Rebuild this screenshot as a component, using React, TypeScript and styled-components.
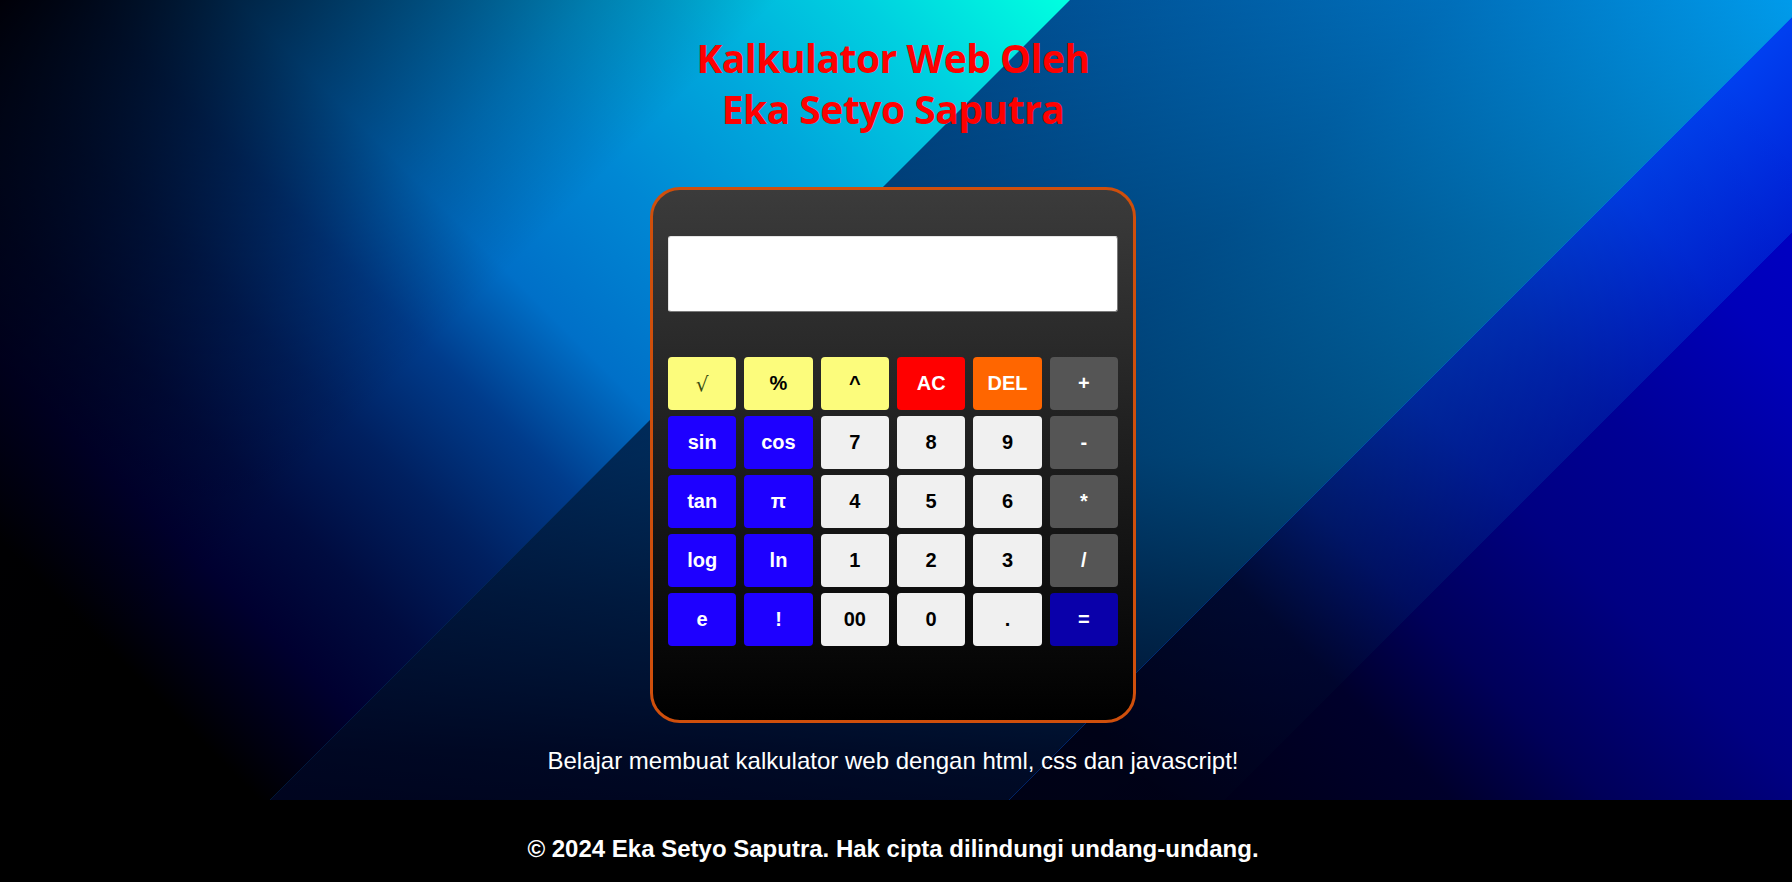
import React, { useState } from "react";
import styled, { createGlobalStyle } from "styled-components";

const GlobalStyle = createGlobalStyle`
  html, body {
    margin: 0;
    padding: 0;
    background: #000;
  }
  body {
    font-family: "Liberation Sans", Arial, sans-serif;
  }
`;

const Page = styled.div`
  display: flex;
  flex-direction: column;
  background: #000;
`;

// first band is painted by Main, the diagonal bands on the right are stacked over it
const Main = styled.main`
  display: grid;
  min-height: 800px;
  background:
    linear-gradient(
      135deg,
      rgba(0, 0, 8, 1) 0%,
      rgba(0, 0, 8, 0.85) 4%,
      rgba(0, 0, 8, 0.6) 11.5%,
      rgba(0, 0, 8, 0.2) 23%,
      rgba(0, 0, 8, 0) 30%
    ),
    linear-gradient(
      45deg,
      #000 0%,
      #000 10%,
      #000030 17%,
      #000c40 22%,
      #002060 28%,
      #003c8c 34%,
      #0070c8 40%,
      #0088d4 48%,
      #00a8dc 56%,
      #00d0e0 64%,
      #00ffe0 72%,
      #00ffe0 100%
    );

  & > * {
    grid-area: 1 / 1;
  }
`;

const MidBand = styled.div`
  clip-path: polygon(1070px 0, 100% 0, 100% 17px, 1009px 100%, 270px 100%);
  background:
    linear-gradient(
      to bottom,
      rgba(0, 0, 24, 0.08) 0%,
      rgba(0, 0, 24, 0.35) 29%,
      rgba(0, 0, 24, 0.55) 57%,
      rgba(0, 0, 24, 0.75) 75%,
      rgba(0, 0, 24, 0.92) 94%,
      rgba(0, 0, 24, 0.95) 100%
    ),
    linear-gradient(135deg, #0058a0 41.3%, #0078c8 56%, #00aaff 69.8%);
`;

const OuterBand = styled.div`
  clip-path: polygon(100% 17px, 100% 100%, 1009px 100%);
  background:
    linear-gradient(
      45deg,
      rgba(0, 0, 16, 1) 0%,
      rgba(0, 0, 16, 0.97) 45%,
      rgba(0, 0, 16, 0.85) 56%,
      rgba(0, 0, 16, 0.6) 62%,
      rgba(0, 0, 16, 0.38) 70%,
      rgba(0, 0, 16, 0.28) 77%,
      rgba(0, 0, 16, 0.08) 86%,
      rgba(0, 0, 16, 0) 95%
    ),
    linear-gradient(135deg, #0040f0 69.8%, #0020d8 78.1%, #0000c8 78.1%, #0000c8 100%);
`;

const Content = styled.div`
  isolation: isolate;
  display: flex;
  flex-direction: column;
  align-items: center;
  padding: 32px 6px 0 0;
`;

const Title = styled.h1`
  margin: 0;
  color: #ff0000;
  font-family: "Open Sans", "Noto Sans", sans-serif;
  font-weight: 700;
  font-size: 39px;
  line-height: 51px;
  letter-spacing: -0.5px;
  text-align: center;
`;

const Calculator = styled.div`
  box-sizing: border-box;
  width: 486px;
  margin-top: 53px;
  padding: 46px 15px 74px;
  border: 3px solid #cf4f0c;
  border-radius: 30px;
  background: linear-gradient(to bottom, #3b3b3b, #000);
  display: flex;
  flex-direction: column;
  gap: 45px;
`;

const Display = styled.input`
  box-sizing: border-box;
  width: 100%;
  height: 76px;
  border: 1px solid;
  border-color: #e4e4e4 #7a7a7a #7a7a7a #e4e4e4;
  border-radius: 3px;
  background: #fff;
  padding: 0 14px;
  font-family: "Liberation Sans", Arial, sans-serif;
  font-size: 32px;
  text-align: right;
  outline: none;
`;

const Keys = styled.div`
  display: grid;
  grid-template-columns: repeat(6, 1fr);
  grid-auto-rows: 53px;
  gap: 6px 8px;
`;

type Variant = "fn" | "clear" | "del" | "op" | "sci" | "num" | "equal";

const palette: Record<Variant, { bg: string; fg: string }> = {
  fn: { bg: "#fcfc7c", fg: "#000" },
  clear: { bg: "#ff0000", fg: "#fff" },
  del: { bg: "#ff6600", fg: "#fff" },
  op: { bg: "#555555", fg: "#fff" },
  sci: { bg: "#1e00ff", fg: "#fff" },
  num: { bg: "#f0f0f0", fg: "#000" },
  equal: { bg: "#0a00aa", fg: "#fff" },
};

const Key = styled.button<{ $variant: Variant; $thin?: boolean }>`
  border: none;
  border-radius: 4px;
  padding: 0;
  background: ${(p) => palette[p.$variant].bg};
  color: ${(p) => (p.$thin ? "#3a4a10" : palette[p.$variant].fg)};
  font-family: ${(p) =>
    p.$thin ? '"DejaVu Serif", serif' : '"Liberation Sans", Arial, sans-serif'};
  font-weight: ${(p) => (p.$thin ? 400 : 700)};
  font-size: 20px;
  cursor: pointer;
`;

const Note = styled.p`
  margin: 24px 0 0;
  color: #fff;
  font-size: 24px;
  line-height: 28px;
  text-align: center;
`;

const Footer = styled.footer`
  padding: 35px 6px 10px 0;
  color: #fff;
  font-weight: 700;
  font-size: 24px;
  line-height: 28px;
  text-align: center;
`;

const keys: [string, Variant][] = [
  ["√", "fn"], ["%", "fn"], ["^", "fn"], ["AC", "clear"], ["DEL", "del"], ["+", "op"],
  ["sin", "sci"], ["cos", "sci"], ["7", "num"], ["8", "num"], ["9", "num"], ["-", "op"],
  ["tan", "sci"], ["π", "sci"], ["4", "num"], ["5", "num"], ["6", "num"], ["*", "op"],
  ["log", "sci"], ["ln", "sci"], ["1", "num"], ["2", "num"], ["3", "num"], ["/", "op"],
  ["e", "sci"], ["!", "sci"], ["00", "num"], ["0", "num"], [".", "num"], ["=", "equal"],
];

export default function App() {
  const [value, setValue] = useState("");

  const press = (label: string) => {
    if (label === "AC") return setValue("");
    if (label === "DEL") return setValue((v) => v.slice(0, -1));
    if (label === "=") {
      try {
        const expr = value
          .replace(/π/g, "Math.PI")
          .replace(/\^/g, "**")
          .replace(/√/g, "Math.sqrt")
          .replace(/sin|cos|tan/g, (m) => `Math.${m}`)
          .replace(/log/g, "Math.log10")
          .replace(/ln/g, "Math.log");
        setValue(String(new Function(`return (${expr})`)()));
      } catch {
        setValue("Error");
      }
      return;
    }
    setValue((v) => v + label);
  };

  return (
    <Page>
      <GlobalStyle />
      <Main>
        <MidBand />
        <OuterBand />
        <Content>
          <Title>
            Kalkulator Web Oleh
            <br />
            Eka Setyo Saputra
          </Title>
          <Calculator>
            <Display value={value} readOnly />
            <Keys>
              {keys.map(([label, variant]) => (
                <Key
                  key={label}
                  $variant={variant}
                  $thin={label === "√"}
                  onClick={() => press(label)}
                >
                  {label}
                </Key>
              ))}
            </Keys>
          </Calculator>
          <Note>Belajar membuat kalkulator web dengan html, css dan javascript!</Note>
        </Content>
      </Main>
      <Footer>© 2024 Eka Setyo Saputra. Hak cipta dilindungi undang-undang.</Footer>
    </Page>
  );
}
